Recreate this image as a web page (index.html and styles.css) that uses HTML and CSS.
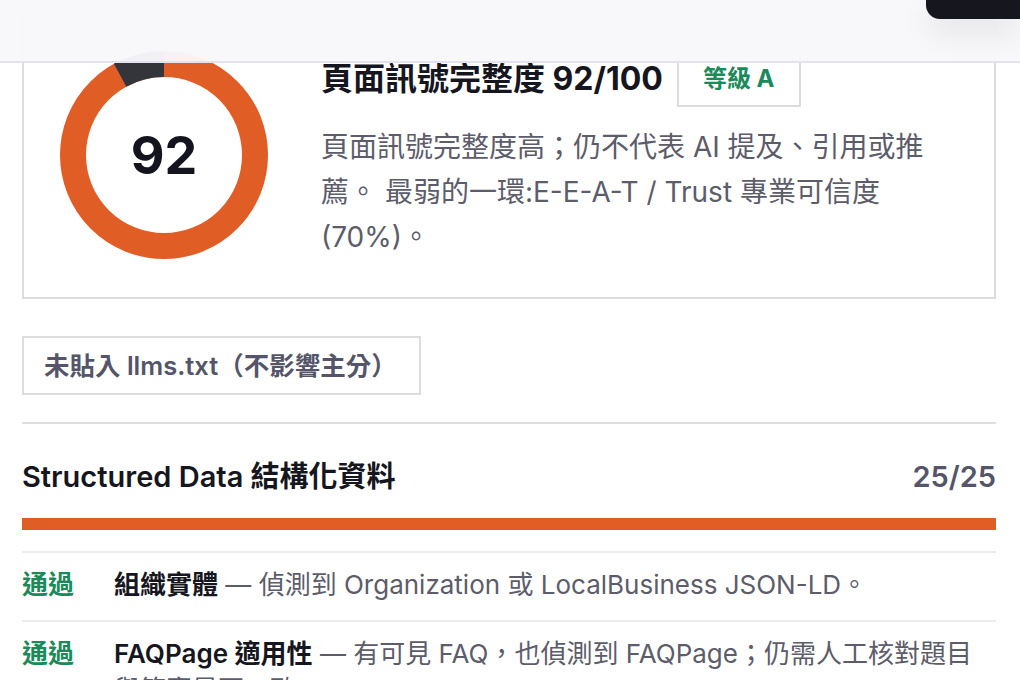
FILE: index.html
```html
<!DOCTYPE html>
<html lang="zh-Hant">
<head>
	<meta charset="utf-8">
	<title>頁面訊號完整度</title>
	<link rel="stylesheet" href="styles.css">
</head>
<body>
	<header class="topbar">
		<span class="topbar-btn"></span>
	</header>

	<main class="page">
		<section class="score-card">
			<div class="donut">
				<svg viewBox="0 0 208 208" width="208" height="208">
					<circle cx="104" cy="104" r="91" fill="none" stroke="#e05d26" stroke-width="26"/>
					<circle cx="104" cy="104" r="91" fill="none" stroke="#34353b" stroke-width="26"
						stroke-dasharray="45.74 571.77" transform="rotate(-118.8 104 104)"/>
				</svg>
				<span class="donut-num">92</span>
			</div>
			<div class="score-body">
				<div class="score-head">
					<h2>頁面訊號完整度 92/100</h2>
					<span class="grade">等級 A</span>
				</div>
				<p class="score-desc">頁面訊號完整度高；仍不代表 AI 提及、引用或推薦。 最弱的一環:E-E-A-T / Trust 專業可信度 (70%)。</p>
			</div>
		</section>

		<div class="chip">未貼入 llms.txt（不影響主分）</div>

		<section class="group">
			<div class="group-head">
				<h3>Structured Data 結構化資料</h3>
				<span class="group-score">25/25</span>
			</div>
			<div class="bar"><span style="width: 100%"></span></div>
			<ul class="checks">
				<li><span class="state pass">通過</span><span><b>組織實體</b> — 偵測到 Organization 或 LocalBusiness JSON-LD。</span></li>
				<li><span class="state pass">通過</span><span><b>FAQPage 適用性</b> — 有可見 FAQ，也偵測到 FAQPage；仍需人工核對題目與答案是否一致。</span></li>
			</ul>
		</section>
	</main>
</body>
</html>
```
FILE: styles.css
```css
html, body { margin: 0; overflow: hidden; background: #fff; }
body { font-family: Inter, "Noto Sans CJK TC", sans-serif; color: #16161e; }

.topbar { position: fixed; top: 0; left: 0; right: 0; height: 61px; background: rgba(248, 248, 251, 0.97); border-bottom: 2px solid #e4e1f0; display: flex; justify-content: flex-end; align-items: flex-start; z-index: 5; }
.topbar-btn { width: 94px; height: 19px; background: #16161f; border-radius: 0 0 0 14px; box-shadow: 0 12px 30px rgba(0, 0, 0, 0.10); }

.page { padding: 12px 24px 0 22px; }

.score-card { border: 2px solid #dcdcdc; padding: 37px 36px; display: flex; gap: 53px; }
.donut { display: grid; place-items: center; width: 208px; height: 208px; flex: none; }
.donut svg, .donut-num { grid-area: 1 / 1; }
.donut-num { font-size: 52px; font-weight: bold; color: #14141e; }

.score-body { flex: 1; }
.score-head { display: flex; align-items: center; gap: 14px; }
.score-head h2 { margin: 0; font-size: 32px; line-height: 40px; font-weight: bold; }
.grade { border: 2px solid #dcdcdc; padding: 12px 24px 12px; font-size: 24px; line-height: 28px; font-weight: bold; color: #1b8a5a; }
.score-desc { margin: 18px 0 0; max-width: 624px; font-size: 28px; line-height: 45px; color: #5c5c6a; }

.chip { display: inline-block; margin-top: 37px; border: 2px solid #dcdcdc; padding: 13px 22px 13px 20px; font-size: 25.5px; line-height: 29px; font-weight: 600; color: #55556a; }

.group { margin-top: 27px; border-top: 2px solid #dedede; }
.group-head { display: flex; justify-content: space-between; align-items: center; padding-top: 35px; }
.group-head h3 { margin: 0; font-size: 29px; line-height: 34px; font-weight: 600; }
.group-score { font-size: 29px; font-weight: 600; color: #55556a; }
.bar { height: 12px; margin-top: 24px; background: #f0f0f0; }
.bar span { display: block; height: 100%; background: #e05d26; }

.checks { list-style: none; margin: 21px 0 0; padding: 0; }
.checks li { display: grid; grid-template-columns: 92px 1fr; border-top: 2px solid #ececec; padding: 14px 0 17px; font-size: 26px; line-height: 36px; color: #5c5c6a; }
.checks b { color: #16161e; font-weight: 600; }
.state { font-weight: 600; }
.state.pass { color: #1b8a5a; }
```
